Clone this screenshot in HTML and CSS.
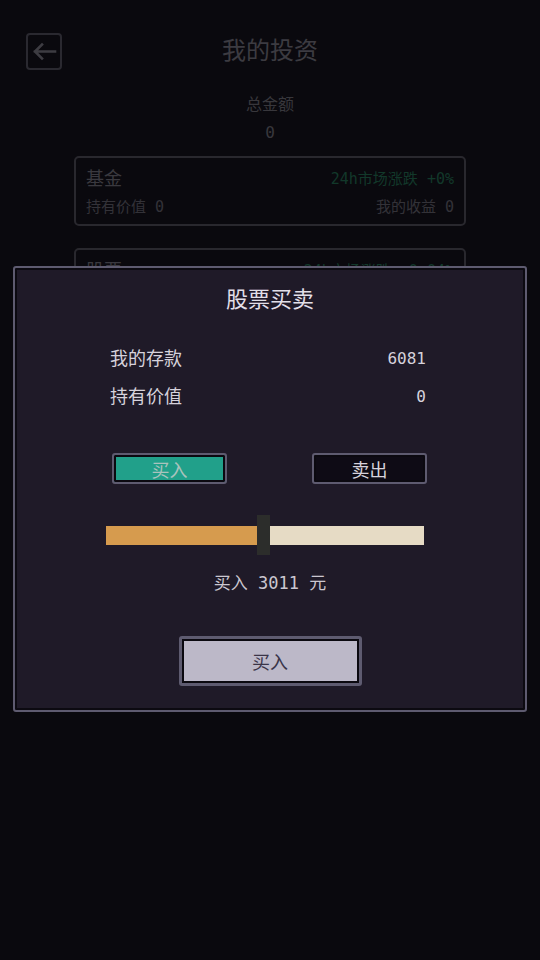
FILE: index.html
```html
<!DOCTYPE html>
<html lang="zh-CN">
<head>
  <meta charset="UTF-8" />
  <meta name="viewport" content="width=device-width, initial-scale=1.0"/>
  <title>我的投资</title>
  <link rel="stylesheet" href="styles.css">
</head>
<body>

  <div class="page">
    <div class="header">
      <button class="back-btn" aria-label="返回">
        <svg width="32" height="33" viewBox="0 0 32 33">
          <path d="M7 16.5 H27 M14 9.5 L7 16.5 L14 23.5" fill="none" stroke="#7a7884" stroke-width="2.6" stroke-linecap="square"/>
        </svg>
      </button>
      <h1>我的投资</h1>
      <span></span>
    </div>

    <div class="total">
      <div class="total-label">总金额</div>
      <div class="total-value">0</div>
    </div>

    <div class="card">
      <div class="card-top">
        <span class="card-name">基金</span>
        <span class="trend">24h市场涨跌 +0%</span>
      </div>
      <div class="card-bottom">
        <span>持有价值 0</span>
        <span>我的收益 0</span>
      </div>
    </div>

    <div class="card">
      <div class="card-top">
        <span class="card-name">股票</span>
        <span class="trend">24h市场涨跌 +0.04%</span>
      </div>
      <div class="card-bottom">
        <span>持有价值 0</span>
        <span>我的收益 0</span>
      </div>
    </div>
  </div>

  <div class="overlay">
    <div class="modal">
      <h2>股票买卖</h2>

      <div class="info-row">
        <span>我的存款</span>
        <span class="num">6081</span>
      </div>
      <div class="info-row">
        <span>持有价值</span>
        <span class="num">0</span>
      </div>

      <div class="tabs">
        <button class="tab active">买入</button>
        <button class="tab">卖出</button>
      </div>

      <div class="slider">
        <div class="slider-fill" style="width: 151px;"></div>
        <div class="slider-thumb"></div>
        <div class="slider-rest"></div>
      </div>

      <div class="amount">买入 3011 元</div>

      <button class="confirm-btn">买入</button>
    </div>
  </div>

</body>
</html>
```

FILE: styles.css
```css
* {
  margin: 0;
  padding: 0;
  box-sizing: border-box;
}

body {
  background: #14121c;
  font-family: "DejaVu Sans Mono", "Noto Sans CJK SC", monospace;
  color: #787682;
  min-height: 960px;
}

/* page behind the dialog */
.header {
  display: grid;
  grid-template-columns: 36px 1fr 36px;
  align-items: center;
  padding: 33px 26px 0;
}

.back-btn {
  width: 36px;
  height: 37px;
  border: 2px solid #545260;
  border-radius: 4px;
  background: transparent;
  display: flex;
  align-items: center;
  justify-content: center;
}

.header h1 {
  text-align: center;
  font-size: 24px;
  font-weight: 400;
  line-height: 37px;
  color: #787682;
}

.total {
  text-align: center;
  margin-top: 24px;
  color: #706e78;
  font-size: 16px;
  line-height: 22px;
}

.total-value {
  margin-top: 6px;
}

.card {
  margin: 12px 74px 0;
  border: 2px solid #52505c;
  border-radius: 5px;
  padding: 8px 10px 6px;
}

.card + .card {
  margin-top: 22px;
}

.card-top,
.card-bottom {
  display: flex;
  justify-content: space-between;
  align-items: center;
}

.card-top {
  line-height: 26px;
}

.card-name {
  font-size: 18px;
  color: #75737e;
}

.trend {
  font-size: 15px;
  color: #247055;
}

.card-bottom {
  margin-top: 4px;
  font-size: 15px;
  line-height: 22px;
  color: #666470;
}

/* dialog */
.overlay {
  position: fixed;
  inset: 0;
  background: rgba(0, 0, 0, 0.5);
  padding: 266px 13px 0;
}

.modal {
  display: flex;
  flex-direction: column;
  background: #1f1a28;
  border: 2px solid #5e5b70;
  border-radius: 3px;
  box-shadow: inset 0 0 0 2px #0c0a11;
  padding: 17px 0 24px;
  color: #d6d2dc;
}

.modal h2 {
  text-align: center;
  font-size: 22px;
  font-weight: 400;
  line-height: 30px;
  color: #e2dfe8;
}

.info-row {
  display: flex;
  justify-content: space-between;
  padding: 0 99px 0 95px;
  font-size: 18px;
  line-height: 28px;
  margin-top: 10px;
}

.modal h2 + .info-row {
  margin-top: 30px;
}

.num {
  font-size: 16px;
}

.tabs {
  display: flex;
  justify-content: space-between;
  padding: 0 98px 0 97px;
  margin-top: 42px;
}

.tab {
  width: 115px;
  height: 31px;
  border: 2px solid #5e5b70;
  border-radius: 3px;
  box-shadow: inset 0 0 0 2px #0b0910;
  background: #0e0b15;
  color: #d6d2dc;
  font-family: inherit;
  font-size: 18px;
}

.tab.active {
  background: #21a08a;
  color: #a9c3bd;
}

.slider {
  display: flex;
  align-items: center;
  width: 318px;
  height: 40px;
  margin: 31px 0 0 91px;
}

.slider-fill {
  height: 19px;
  background: #d69b4e;
}

.slider-thumb {
  width: 13px;
  height: 40px;
  background: #2c2d2b;
}

.slider-rest {
  flex: 1;
  height: 19px;
  background: #e6dbc5;
}

.amount {
  text-align: center;
  margin-top: 16px;
  font-size: 17px;
  line-height: 24px;
  color: #cbc7d0;
}

.confirm-btn {
  align-self: center;
  width: 183px;
  height: 50px;
  margin-top: 41px;
  border: 3px solid #5e5b70;
  border-radius: 3px;
  box-shadow: inset 0 0 0 2px #0b0910;
  background: #bcb8c8;
  color: #3a3448;
  font-family: inherit;
  font-size: 18px;
}
```
